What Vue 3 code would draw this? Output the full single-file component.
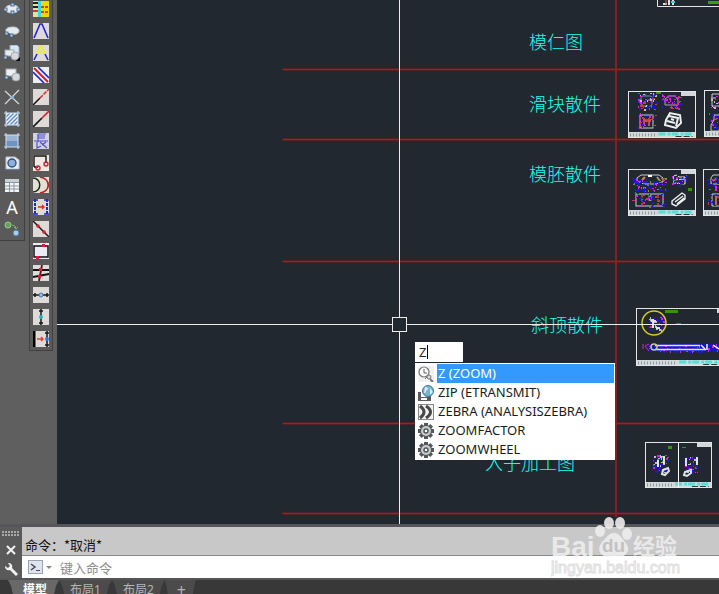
<script setup>
import { ref } from 'vue'

const typed = ref('Z')
const command = ref('')
const activeTab = ref(0)
const selected = ref(0)

const blue = '#2323d8'
const grip = (x, y) =>
  `<rect x="${x}" y="${y}" width="3" height="3" fill="#b9cfe6" stroke="#34577e" stroke-width=".8"/>`
const sheet = '<rect width="16" height="16" fill="#dedad8"/>'
const hatch = '<path d="M2 6L6 2M2 10L10 2M2 14L14 2M6 14L14 6M10 14L14 10" fill="none" stroke="#5f8ccb" stroke-width="1.4"/>'

const drawTools = [
  { name: 'Ellipse', art: `<ellipse cx="8" cy="8" rx="7" ry="4" fill="#e6ebef" stroke="#c0c9d1"/>${grip(0, 7)}${grip(7, 10)}${grip(13, 7)}${grip(7, 2)}` },
  { name: 'Elliptical arc', art: `<path d="M2 9C1 5 5 4 9 4s6 2 6 4-3 4-8 3" fill="#e6ebef" stroke="#c0c9d1"/>${grip(1, 9)}${grip(6, 11)}` },
  { name: 'Insert block', art: `<path d="M6 0h7l2 2v8H6z" fill="#d8e7f5" stroke="#8fa7bd"/><rect x="1" y="5" width="9" height="6" fill="#e8ecef" stroke="#9fa9b1"/><circle cx="11" cy="11" r="4" fill="#d4d9de" stroke="#a3a9af"/>${grip(0, 11)}<path d="M16 12v4h-4z" fill="#000"/>` },
  { name: 'Create block', art: `<rect x="2" y="2" width="10" height="7" fill="#eef1f3" stroke="#9fa9b1"/><circle cx="12" cy="10" r="4" fill="#d4d9de" stroke="#a3a9af"/>${grip(1, 9)}` },
  { name: 'Point', art: '<path d="M1 2L15 15M15 1L1 15" stroke="#d5dade" stroke-width="1.2"/><rect x="7" y="7" width="3" height="3" fill="#8eb4dd"/>' },
  { name: 'Hatch', art: `<rect x="2" y="2" width="12" height="12" fill="#eef4fb"/>${hatch}<path d="M2 0v16M14 0v16M0 2h16M0 14h16" stroke="#cfe0f2"/>` },
  { name: 'Gradient', art: '<rect x="2" y="2" width="12" height="12" fill="#7292c0"/><rect x="2" y="2" width="12" height="6" fill="#9bb4d6"/><path d="M2 0v16M14 0v16M0 2h16M0 14h16" stroke="#cfe0f2"/>' },
  { name: 'Region', art: '<path d="M2 2h9l4 3v9H2z" fill="#e9eef2" stroke="#bcc7d0"/><circle cx="8" cy="8" r="4" fill="#8fb0dc" stroke="#32527b" stroke-width="1.4"/><path d="M0 15h16" stroke="#4f6783"/>' },
  { name: 'Table', art: '<rect x="1" y="2" width="14" height="13" fill="#f3f5f6"/><rect x="1" y="2" width="14" height="3" fill="#c9d0d7"/><path d="M1 5.5h14M1 9h14M1 12h14M5.5 5v10M10 5v10" stroke="#8c959d"/>' },
  { name: 'Multiline text', letter: true, art: '' },
  { name: 'Add selected', art: '<circle cx="4" cy="4" r="3" fill="#62a45a" stroke="#9ccb8e"/><circle cx="12" cy="12" r="3" fill="#a9cce9" stroke="#477ba6"/><path d="M8 4q4 0 4 4M10 6l2 2 2-2" fill="none" stroke="#78ad6d"/>' }
]

const modTools = [
  { name: 'Layer palette', art: '<rect width="16" height="16" fill="#e6e0a0"/><path d="M0 2h6M0 6h6" stroke="#222" stroke-width="2"/><path d="M0 10h6" stroke="#d33" stroke-width="2"/><rect x="5" width="4" height="16" fill="#2fdfe6"/><rect x="8" width="8" height="16" fill="#eed800"/><path d="M8 6h8M8 11h8" stroke="#e23a1c" stroke-width="2" stroke-dasharray="3 1"/>' },
  { name: 'Angle', art: `${sheet}<path d="M1 15L7 1l2 0 6 14" fill="none" stroke="${blue}" stroke-width="1.6"/>` },
  { name: 'Angle trim', art: `${sheet}<path d="M8 1l4 6H4z" fill="none" stroke="#eeee22" stroke-width="1.5"/><path d="M1 15l3-6M15 15l-3-6" stroke="${blue}" stroke-width="1.6"/>` },
  { name: 'Offset lines', art: `<rect width="16" height="16" fill="#efeeee"/><path d="M0 5l11 11M5 0l11 11" stroke="${blue}" stroke-width="1.6"/><path d="M1 1l14 14" stroke="#d31a2b" stroke-width="2"/>` },
  { name: 'Line to dash', art: `${sheet}<path d="M0 16l7-7" stroke="#111" stroke-width="1.5"/><path d="M7 9l9-9" stroke="#d92c28" stroke-width="1.5" stroke-dasharray="4 1"/>` },
  { name: 'Line colour', art: `${sheet}<path d="M0 16l9-9" stroke="#111" stroke-width="1.6"/><path d="M9 7l7-7" stroke="#e51c24" stroke-width="1.6"/>` },
  { name: 'Length', art: '<rect width="16" height="16" fill="#d3d1dd"/><path d="M5 1v8M5 1h8M5 3h7M5 5h7M1 8h14M4 9v6l4-2M7 9l7 6M13 9l-4 3" fill="none" stroke="#5151ca" stroke-width="1.2"/>' },
  { name: 'Break corner', art: '<rect width="16" height="16" fill="#eee9e3"/><path d="M1 12V1h12v7M1 12h4" fill="none" stroke="#111" stroke-width="1.4"/><circle cx="5" cy="13" r="2" fill="none" stroke="#e01c2c" stroke-width="1.4"/><circle cx="13" cy="9" r="2" fill="none" stroke="#e01c2c" stroke-width="1.4"/>' },
  { name: 'Offset arc', art: '<rect width="16" height="16" fill="#e5dfd4"/><path d="M0 1c9 0 9 14 0 14" fill="none" stroke="#173117" stroke-width="1.5"/><path d="M7 0c11 2 11 14 0 16" fill="none" stroke="#b92227" stroke-width="1.7"/>' },
  { name: 'Move edge', art: `${sheet}<path d="M2 0v16M14 0v16" stroke="#1c25dc" stroke-width="2" stroke-dasharray="3 1"/><path d="M0 1h5M0 15h5M11 1h5M11 15h5" stroke="${blue}" stroke-width="1.5"/><path d="M5 8h6M9 6l2 2-2 2" fill="none" stroke="#e22" stroke-width="1.4"/>` },
  { name: 'Join points', art: `${sheet}<path d="M0 0l16 16" stroke="#171717" stroke-width="1.5"/><circle cx="5" cy="5" r="1.8" fill="#dc1a28"/><circle cx="11" cy="11" r="1.8" fill="#dc1a28"/>` },
  { name: 'Rectangle', art: '<rect width="16" height="16" fill="#eceaf2"/><rect x="1" y="3" width="14" height="11" fill="none" stroke="#111" stroke-width="1.5"/><rect x="9" y="1" width="3" height="3" fill="#e7173a"/><rect x="3" y="13" width="3" height="3" fill="#e7173a"/>' },
  { name: 'Intersections', art: `${sheet}<path d="M0 5h16M0 12l16-3" stroke="#111" stroke-width="1.8"/><path d="M9 0L6 16" stroke="#54151a" stroke-width="1.8"/><rect x="6" y="3" width="3" height="3" fill="#e7173a"/><rect x="5" y="10" width="3" height="3" fill="#e7173a"/>` },
  { name: 'Horizontal middle', art: `${sheet}<path d="M0 8h16M2 6v4M14 6v4" stroke="#16171b" stroke-width="1.5"/><circle cx="8" cy="8" r="2" fill="#9cbce5" stroke="#4577b2"/>` },
  { name: 'Vertical middle', art: `${sheet}<path d="M8 0v16M6 2h4M6 14h4" stroke="#16171b" stroke-width="1.5"/><circle cx="8" cy="8" r="2" fill="#31abc0"/>` },
  { name: 'Align edge', art: `${sheet}<path d="M1 0v16" stroke="#000" stroke-width="3"/><path d="M14 0v16M12 2h4M12 14h4" stroke="#16171b" stroke-width="1.5"/><path d="M4 8h6M8 6l2 2-2 2" fill="none" stroke="#ea4020" stroke-width="1.4"/><circle cx="14" cy="8" r="2" fill="#2a7be0"/>` }
]

const gear = '<g fill="#53565a"><circle cx="8" cy="8" r="6"/><path d="M6 0h4v16H6zM0 6h16v4H0z"/><path d="M6 0h4v16H6zM0 6h16v4H0z" transform="rotate(45 8 8)"/></g><circle cx="8" cy="8" r="5" fill="#c8cacc"/><circle cx="8" cy="8" r="2" fill="#fff" stroke="#55585c" stroke-width="1.5"/>'
const suggestions = [
  { text: 'Z (ZOOM)', art: '<rect width="16" height="16" fill="#f1f1f1"/><circle cx="6" cy="6" r="5" fill="#fafafa" stroke="#777" stroke-width="1.2"/><path d="M6 3v4h3M9 11l-2 2" fill="none" stroke="#666"/><circle cx="11" cy="11" r="2" fill="#ddd" stroke="#777"/><path d="M12 13l3 3" stroke="#777" stroke-width="2"/>' },
  { text: 'ZIP (ETRANSMIT)', art: '<path d="M0 7h3v5h8v-3h2v7H0z" fill="#565b60"/><rect x="3" y="13" width="6" height="2" fill="#fff"/><circle cx="10" cy="6" r="5.5" fill="#75b3d0" stroke="#3f7590"/><path d="M7 2c3 0 4 2 2 3s0 3-3 3M12 3l3 4-3 3" fill="#d6edf3"/>' },
  { text: 'ZEBRA (ANALYSISZEBRA)', art: '<rect x=".5" y=".5" width="15" height="15" fill="#f2f2f2" stroke="#888"/><path d="M2 2q8 6 0 12M8 2q9 6 0 12" fill="none" stroke="#474747" stroke-width="3"/>' },
  { text: 'ZOOMFACTOR', art: gear },
  { text: 'ZOOMWHEEL', art: gear }
]

const rows = [69, 139, 261, 423, 513]

const labels = [
  { text: '模仁图', x: 529, y: 49 },
  { text: '滑块散件', x: 529, y: 111 },
  { text: '模胚散件', x: 529, y: 181 },
  { text: '斜顶散件', x: 531, y: 332 },
  { text: '入子加工图', x: 485, y: 470 }
]

// Title blocks of the drawing sheets
const sheets = [
  { x: 628, y: 91, w: 68, h: 47 },
  { x: 704, y: 90, w: 68, h: 47 },
  { x: 628, y: 169, w: 68, h: 47 },
  { x: 703, y: 169, w: 68, h: 47 },
  { x: 636, y: 308, w: 96, h: 58 },
  { x: 645, y: 442, w: 67, h: 46 }
]

// Dimension marks spread around each part
function scatter(cx, cy, w, h, count, colours, seed) {
  let s = seed
  const next = () => (s = (s * 16807) % 2147483647) / 2147483647
  return Array.from({ length: count }, () => ({
    x: Math.round(cx - w / 2 + next() * w),
    y: Math.round(cy - h / 2 + next() * h),
    w: 1 + Math.round(next()),
    h: 1 + Math.round(next()),
    fill: colours[Math.floor(next() * colours.length)]
  }))
}
const m = '#e01be8'
const b = '#2018e0'
const r = '#c83a44'
const g = '#b8c4c0'
const marks = [
  ...scatter(647, 101, 19, 16, 75, [m, b, r, g, b], 11),
  ...scatter(671, 101, 19, 14, 50, [m, m, r, b], 23),
  ...scatter(646, 121, 19, 17, 40, [m, r, b, r], 37),
  ...scatter(649, 184, 33, 13, 110, [b, b, b, m, '#8a8a30'], 41),
  ...scatter(648, 199, 33, 16, 50, [b, r, m, b], 53),
  ...scatter(679, 180, 15, 10, 26, [b, b, m], 67),
  ...scatter(715, 101, 9, 14, 14, [m, g], 71),
  ...scatter(714, 121, 10, 16, 22, [b, b, m], 79),
  ...scatter(714, 184, 12, 12, 24, [b, b, m], 83),
  ...scatter(714, 199, 12, 14, 20, [b, r, b], 89),
  ...scatter(656, 323, 14, 14, 60, [b, b, m, g], 97),
  ...scatter(686, 348, 74, 8, 100, [b, b, b, m], 101),
  ...scatter(660, 463, 14, 17, 80, [m, b, b, g], 103),
  ...scatter(691, 465, 14, 16, 44, [b, g, b, m], 109)
]
</script>

<template>
  <div class="app">
    <main class="workspace">
      <aside class="dock">
        <div class="toolbar wide">
          <button v-for="t in drawTools" :key="t.name" type="button" class="tool" :aria-label="t.name">
            <span v-if="t.letter" class="letter">A</span>
            <svg v-else viewBox="0 0 16 16" width="16" height="16" v-html="t.art" />
          </button>
        </div>
        <div class="toolbar">
          <button v-for="t in modTools" :key="t.name" type="button" class="tool" :aria-label="t.name">
            <svg viewBox="0 0 16 16" width="16" height="16" v-html="t.art" />
          </button>
        </div>
      </aside>

      <section class="canvas">
        <svg class="drawing" width="100%" height="100%">
          <g transform="translate(-57 0)">
            <rect v-for="y in rows" :key="y" class="rule" x="283" :y="y" width="3000" height="1" />
            <rect class="upright" x="615" y="0" width="2" height="517" />

            <text v-for="l in labels" :key="l.text" class="label" :x="l.x" :y="l.y">{{ l.text }}</text>

            <path d="M657.5 0V6.5H760" class="frame" />
            <path d="M663 4h4M669 0v5M673 0v5" stroke="#d8e6e6" stroke-width="2" />
            <path d="M666 0v5" stroke="#d54" stroke-width="1" />
            <path d="M671 2h4" stroke="#22e0d8" stroke-width="2" />
            <path d="M708 2.5h20" stroke="#37a010" stroke-width="3" />

            <g v-for="(s, i) in sheets" :key="i">
              <rect :x="s.x + s.w - 15" :y="s.y" width="15" height="5" fill="#d5d8da" />
              <rect :x="s.x" :y="s.y + s.h - 6" :width="s.w" height="6" fill="#d3dadc" />
              <path :d="`M${s.x + 2} ${s.y + s.h - 3}h${s.w * 0.4}`" stroke="#8c999e" stroke-width="3" stroke-dasharray="1 2" />
              <path :d="`M${s.x + s.w * 0.45} ${s.y + s.h - 4}h${s.w * 0.5}`" stroke="#4fe0d6" stroke-width="3" stroke-dasharray="7 2 3 1" />
              <path :d="`M${s.x + s.w * 0.7} ${s.y + s.h - 1.5}h${s.w * 0.25}`" stroke="#303a40" stroke-width="1" stroke-dasharray="6 2" />
              <rect class="frame" :x="s.x + 0.5" :y="s.y + 0.5" :width="s.w - 1" :height="s.h - 1" />
            </g>

            <g fill="none" stroke="#c5cdcf">
              <rect x="641" y="96" width="11" height="10" rx="2" stroke="#7a83c4" />
              <path d="M665 105v-6l4-3h6l3 4v5z" stroke="#b39ac0" />
              <rect x="640" y="115" width="13" height="13" />
              <path d="M644 118v8M649 118v8M643 121h8" stroke="#d44a50" stroke-width="2" />
              <path d="M666 120l4-7 10 2 1 8-5 5-11-3zM669 116l9 2-2 8M667 121l8 2M671 119l3 1" stroke="#eef0f0" stroke-width="2" />
              <path d="M637 182v-4l4-3h18l4 3v4h-4l-2 2h-14l-2-2z" />
              <path d="M642 180l3-3M657 177l3 4" stroke="#c08a68" stroke-width="2" />
              <path d="M648 176h4" stroke="#fff" stroke-width="2" />
              <rect x="636" y="194" width="27" height="12" />
              <path d="M642 195v10M658 195v10" stroke="#c32d36" stroke-width="2" stroke-dasharray="3 1" />
              <path d="M650 194v7" stroke="#8c9396" stroke-width="3" />
              <path d="M673 176l4-1 2 2h6v7l-11-1zM674 180l10-1" stroke="#e5e9ea" />
              <path d="M672 201l10-8 3 2v4l-9 7-4-2zM675 202l8-6M677 204l7-6" stroke="#f0f2f2" stroke-width="1.4" />
              <path d="M720 94h-8v12h8M711 98h5M720 115h-6v5l-3 5v6h8" />
              <path d="M720 175h-7l-2 3v6h8M720 194h-8v12h8" />
              <path d="M713 181l4-3M716 196v9" stroke="#b56954" stroke-width="2" />
            </g>
            <rect x="648" y="343" width="74" height="9" fill="#1714b8" />
            <rect v-for="(p, i) in marks" :key="'m' + i" :x="p.x" :y="p.y" :width="p.w" :height="p.h" :fill="p.fill" />

            <g fill="none">
              <path d="M653 319v9M651 321h5M656 328h4" stroke="#e0e4e4" stroke-width="2" />
              <circle cx="654" cy="323" r="12" stroke="#d4cf19" stroke-width="1.5" />
              <path d="M655 345.5H700M655 349.5H706" stroke="#e2e5ef" stroke-width="1.5" />
              <circle cx="654" cy="347" r="3" stroke="#c6ce61" stroke-width="1.5" />
              <path d="M649 344l-4 2 4 5M643 344v5" stroke="#c332b5" />
              <path d="M701 345l4 4M707 344v6M713 345l6 4" stroke="#f2f5f5" stroke-width="1.5" />
              <path d="M678.5 442v46" stroke="#fff" />
              <path d="M664 456v8M658 460v7M663 470l5-2 1 3-4 4-3-1zM686 458v8M697 457v8M685 472l6-2v3l-4 3-3-1z" stroke="#dfe5e4" stroke-width="2" />
            </g>
            <g fill="#359312">
              <rect x="656" y="92" width="5" height="2" />
              <rect x="688" y="188" width="4" height="3" />
              <rect x="665" y="310" width="13" height="3" />
              <rect x="676" y="323" width="5" height="2" />
              <rect x="668" y="446" width="4" height="3" />
              <rect x="682" y="447" width="4" height="1" />
            </g>

            <g class="crosshair">
              <path d="M57 324.5H393M406 324.5H3000M399.5 0V318M399.5 331V3000" />
              <rect x="392.5" y="317.5" width="14" height="14" />
            </g>
          </g>
        </svg>

        <div class="popup">
          <input v-model="typed" class="typed" type="text" aria-label="Command" />
          <i class="caret"></i>
          <div class="list" role="listbox">
            <button
              v-for="(s, i) in suggestions"
              :key="s.text"
              type="button"
              role="option"
              class="option"
              :class="{ on: i === selected }"
              :aria-selected="i === selected"
              @click="selected = i"
            >
              <svg viewBox="0 0 16 16" width="16" height="16" v-html="s.art" />
              <span>{{ s.text }}</span>
            </button>
          </div>
        </div>
      </section>
    </main>

    <section class="console">
      <div class="handle">
        <svg width="18" height="6" viewBox="0 0 18 6" aria-hidden="true">
          <path d="M0 1h18M0 4h18" stroke="#a8a8a8" stroke-width="2" stroke-dasharray="2 1" />
        </svg>
        <button type="button" aria-label="Close">
          <svg width="12" height="12" viewBox="0 0 12 12"><path d="M2 2l8 8M10 2l-8 8" stroke="#f2f2f2" stroke-width="2" /></svg>
        </button>
        <button type="button" aria-label="Customize">
          <svg width="14" height="14" viewBox="0 0 14 14">
            <path d="M1 3l3 2 2-2-2-3c3 0 5 2 4 5l6 6-2 2-6-6C3 8 1 6 1 3z" fill="#f2f2f2" />
          </svg>
        </button>
      </div>
      <div class="console-main">
        <p class="log">命令：*取消*</p>
        <div class="prompt">
          <button type="button" aria-label="Recent commands">
            <svg width="24" height="14" viewBox="0 0 24 14">
              <rect x=".5" y=".5" width="14" height="13" fill="#dfe4ee" stroke="#9ba3b2" />
              <path d="M3 4l4 3-4 3" fill="none" stroke="#454b58" stroke-width="1.5" />
              <path d="M8 10.5h4" stroke="#454b58" />
              <path d="M18 6h6l-3 3z" fill="#888" />
            </svg>
          </button>
          <input v-model="command" type="text" placeholder="键入命令" aria-label="键入命令" />
        </div>
      </div>

      <svg class="watermark" width="132" height="62" viewBox="0 0 132 62" aria-hidden="true">
        <g fill="#ededed">
          <text x="0" y="40" class="brand">Bai</text>
          <ellipse cx="49" cy="15" rx="5" ry="6" />
          <ellipse cx="58" cy="7" rx="5" ry="6" />
          <ellipse cx="69" cy="7" rx="5" ry="6" />
          <ellipse cx="76" cy="18" rx="5" ry="6" />
          <path d="M63 17c5 0 8 5 11 9 4 4 4 9 1 12-3 4-8 2-12 2s-9 2-13-2c-3-4-2-8 1-12 4-4 7-9 12-9z" />
          <text x="82" y="38" class="cn">经验</text>
        </g>
        <text x="51" y="36" class="du">du</text>
        <text x="0" y="57" class="site">jingyan.baidu.com</text>
      </svg>
    </section>

    <nav class="tabs">
      <button
        v-for="(t, i) in ['模型', '布局1', '布局2']"
        :key="t"
        type="button"
        class="tab"
        :class="{ active: i === activeTab }"
        @click="activeTab = i"
      >{{ t }}</button>
      <button type="button" class="tab add">+</button>
    </nav>
  </div>
</template>

<style>
html,
body {
  margin: 0;
  background: #383838;
}
</style>

<style scoped>
.app {
  height: 100vh;
  display: flex;
  flex-direction: column;
  overflow: hidden;
  font-family: "Noto Sans", "Noto Sans CJK SC", sans-serif;
}
button {
  padding: 0;
  border: 0;
  background: none;
  font: inherit;
  color: inherit;
}
input {
  box-sizing: border-box;
  min-width: 0;
  border: 0;
  outline: 0;
  font: inherit;
}
svg {
  display: block;
}
.workspace {
  flex: 1;
  min-height: 0;
  display: flex;
}
.dock {
  flex: none;
  display: flex;
  align-items: flex-start;
  gap: 4px;
  padding-right: 4px;
  background: #5f5f5f;
  overflow: hidden;
}
.toolbar {
  display: flex;
  flex-direction: column;
  width: 22px;
  margin-top: -2px;
  border: 1px solid #404040;
  border-top: 0;
  background: #5a5a5a;
}
.wide {
  border-left: 0;
  width: 24px;
}
.tool {
  display: grid;
  place-items: center;
  height: 22px;
}
.letter {
  color: #fff;
  font-size: 18px;
  line-height: 22px;
}
.canvas {
  flex: 1;
  min-width: 0;
  position: relative;
  overflow: hidden;
  background: #212830;
}
.rule {
  fill: #c01018;
  stroke: rgba(200, 16, 24, 0.3);
  stroke-width: 2;
}
.upright {
  fill: #8c1c20;
}
.label {
  fill: #1afff2;
  font-family: "Noto Sans CJK SC", sans-serif;
  font-size: 18px;
  font-weight: 300;
}
.frame {
  fill: none;
  stroke: #e3e6e8;
}
.crosshair {
  fill: none;
  stroke: #eceeee;
}
.popup {
  position: absolute;
  left: 358px;
  top: 342px;
  width: 200px;
  display: flex;
  flex-direction: column;
  gap: 1px;
  color: #1b1b1b;
  font-size: 13px;
}
.typed {
  width: 48px;
  height: 20px;
  padding: 0 4px;
  background: #fff;
  color: #222;
}
.caret {
  position: absolute;
  left: 12px;
  top: 3px;
  width: 1px;
  height: 14px;
  background: #000;
}
.list {
  display: flex;
  flex-direction: column;
  padding: 1px 1px 1px 0;
  background: #fff;
}
.option {
  display: flex;
  align-items: center;
  height: 19px;
  padding-left: 3px;
  text-align: left;
}
.option span {
  flex: 1;
  margin-left: 3px;
  padding-left: 1px;
  line-height: 19px;
}
.on span {
  background: #3399ff;
  color: #fff;
}
.console {
  flex: none;
  position: relative;
  display: flex;
  border-top: 3px solid #555659;
  border-bottom: 2px solid #555;
}
.handle {
  width: 22px;
  display: flex;
  flex-direction: column;
  align-items: center;
  justify-content: space-between;
  padding: 4px 0 1px;
  box-sizing: border-box;
  background: #5a5a5a;
}
.console-main {
  flex: 1;
  min-width: 0;
  font-size: 13px;
  font-family: "Noto Sans CJK SC", sans-serif;
}
.log {
  margin: 0;
  padding: 8px 3px 0;
  line-height: 20px;
  background: #c8c8c8;
  border-bottom: 1px solid #8a8a8a;
  color: #111;
}
.prompt {
  display: flex;
  align-items: center;
  gap: 8px;
  height: 22px;
  padding-left: 6px;
  background: #fff;
}
.prompt input {
  flex: 1;
  height: 20px;
  padding: 0;
  background: none;
}
.prompt input::placeholder {
  color: #8d8d8d;
  opacity: 1;
}
.watermark {
  position: absolute;
  right: 36px;
  bottom: 0;
  pointer-events: none;
  opacity: 0.9;
}
.brand {
  font: bold 28px "Liberation Sans", sans-serif;
}
.cn {
  font: bold 22px "Noto Sans CJK SC", sans-serif;
}
.du {
  font: bold 19px "Liberation Sans", sans-serif;
  fill: #c2c2c2;
}
.site {
  font: 16px "Liberation Sans", sans-serif;
  fill: #fff;
  stroke: #dcdcdc;
}
.tabs {
  flex: none;
  display: flex;
  height: 14px;
  padding-left: 8px;
  overflow: hidden;
  background: #383838;
}
.tab {
  flex: none;
  height: 20px;
  padding: 0 11px;
  background: #4b4b4b;
  clip-path: polygon(0 0, 100% 0, 94% 30%, 88% 100%, 12% 100%, 6% 30%);
  color: #b4b4b4;
  font-size: 12px;
  line-height: 18px;
}
.active {
  padding: 0 12px 0 15px;
  background: #686868;
  color: #fff;
  font-weight: bold;
}
.add {
  padding: 0 10px 0 12px;
  font-size: 16px;
  line-height: 16px;
}
</style>
